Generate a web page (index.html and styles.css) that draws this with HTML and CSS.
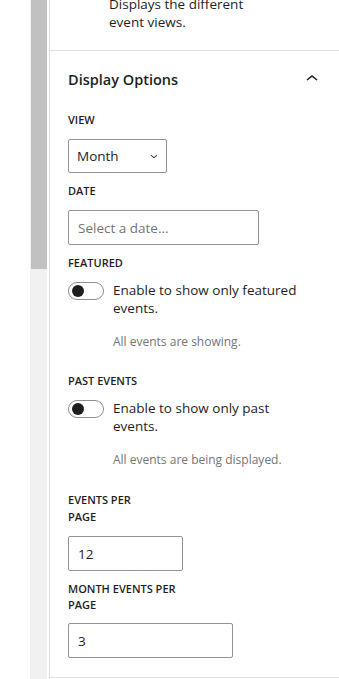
FILE: index.html
```html
<!DOCTYPE html>
<html>
<head>
<meta charset="utf-8">
<link rel="stylesheet" href="styles.css">
</head>
<body>
<div class="page">
  <div class="gutter"></div>
  <div class="scrollbar"><div class="thumb"></div></div>
  <div class="panel">
    <div class="block-card">
      <p class="block-desc">Displays the different<br>event views.</p>
    </div>
    <div class="section">
      <div class="section-head">
        <h2 class="section-title">Display Options</h2>
        <svg class="chev-up" width="24" height="24" viewBox="0 0 24 24"><path d="M6.5 12.4 12 8l5.5 4.4-.9 1.2L12 9.9l-4.6 3.7z" fill="#1e1e1e"/></svg>
      </div>

      <div class="field">
        <label class="label">View</label>
        <div class="select">
          <span>Month</span>
          <svg width="14" height="14" viewBox="0 0 24 24"><path d="M17.5 11.6 12 16l-5.5-4.4.9-1.2L12 14.1l4.6-3.7z" fill="#1e1e1e"/></svg>
        </div>
      </div>

      <div class="field">
        <label class="label">Date</label>
        <div class="input wide placeholder">Select a date...</div>
      </div>

      <div class="field toggle-field">
        <label class="label">Featured</label>
        <div class="toggle-row">
          <span class="toggle"><span class="knob"></span></span>
          <span class="toggle-text">Enable to show only featured events.</span>
        </div>
        <p class="help">All events are showing.</p>
      </div>

      <div class="field toggle-field">
        <label class="label">Past Events</label>
        <div class="toggle-row">
          <span class="toggle"><span class="knob"></span></span>
          <span class="toggle-text">Enable to show only past events.</span>
        </div>
        <p class="help">All events are being displayed.</p>
      </div>

      <div class="field">
        <label class="label two-line">Events per<br>page</label>
        <div class="input small">12</div>
      </div>

      <div class="field last">
        <label class="label two-line tight">Month events per<br>page</label>
        <div class="input medium">3</div>
      </div>
    </div>
  </div>
</div>
</body>
</html>
```

FILE: styles.css
```css
* { box-sizing: border-box; }
html, body {
  margin: 0;
  padding: 0;
  background: #fff;
  width: 339px;
  height: 679px;
  overflow: hidden;
}
body {
  font-family: "Open Sans", "Noto Sans", sans-serif;
  color: #1e1e1e;
  font-size: 13px;
}
.page {
  display: flex;
  height: 679px;
}
.gutter {
  width: 30px;
  flex: none;
}
.scrollbar {
  width: 17px;
  flex: none;
  background: #f1f1f1;
  margin-right: 2px;
}
.thumb {
  height: 269px;
  margin-left: 1px;
  background: #c1c1c1;
}
.panel {
  flex: 1;
  border-left: 1px solid #e0e0e0;
  overflow: hidden;
}
.block-card {
  border-bottom: 1px solid #e0e0e0;
  padding: 0 18px 19px 59px;
}
.block-desc {
  margin: -5px 0 0;
  line-height: 18px;
  font-size: 13.5px;
}
.section {
  padding: 0 18px 0 18px;
  border-bottom: 1px solid #e0e0e0;
  height: 627px;
}
.section-head {
  display: flex;
  justify-content: space-between;
  align-items: flex-start;
  padding-top: 19px;
  height: 61px;
}
.section-title {
  margin: 0;
  font-size: 14.5px;
  font-weight: 600;
  line-height: 20px;
}
.chev-up {
  margin-top: -3px;
  margin-right: -3px;
}
.field {
  display: flex;
  flex-direction: column;
  align-items: flex-start;
  margin-bottom: 10px;
}
.label {
  font-size: 11px;
  font-weight: 600;
  text-transform: uppercase;
  line-height: 16px;
  margin-bottom: 11px;
}
.label.two-line {
  line-height: 17px;
  margin-bottom: 11px;
}
.label.two-line.tight {
  line-height: 16px;
  margin-bottom: 10px;
}
.select {
  width: 99px;
  height: 34px;
  border: 1px solid #949494;
  border-radius: 2px;
  display: flex;
  align-items: center;
  justify-content: space-between;
  padding: 0 5px 0 8px;
  font-size: 13.5px;
}
.input {
  height: 35px;
  border: 1px solid #949494;
  border-radius: 2px;
  display: flex;
  align-items: center;
  padding: 0 9px;
  font-size: 13.5px;
}
.input.wide { width: 191px; }
.input.small { width: 115px; }
.input.medium { width: 165px; }
.placeholder { color: #757575; }
.toggle-field { margin-bottom: 24px; }
.toggle-row {
  display: flex;
  align-items: flex-start;
  gap: 9px;
}
.toggle {
  flex: none;
  width: 36px;
  height: 18px;
  border: 1px solid #8f8f8f;
  border-radius: 9px;
  display: flex;
  align-items: center;
  padding-left: 3px;
}
.knob {
  width: 12px;
  height: 12px;
  border-radius: 50%;
  background: #1e1e1e;
}
.toggle-text {
  font-size: 13.5px;
  line-height: 18px;
  width: 200px;
  margin-top: -1px;
}
.help {
  margin: 17px 0 0 45px;
  font-size: 12px;
  line-height: 16px;
  color: #757575;
}
.toggle-field .help { margin-bottom: -1px; }
.field.last { margin-bottom: 0; }
```
